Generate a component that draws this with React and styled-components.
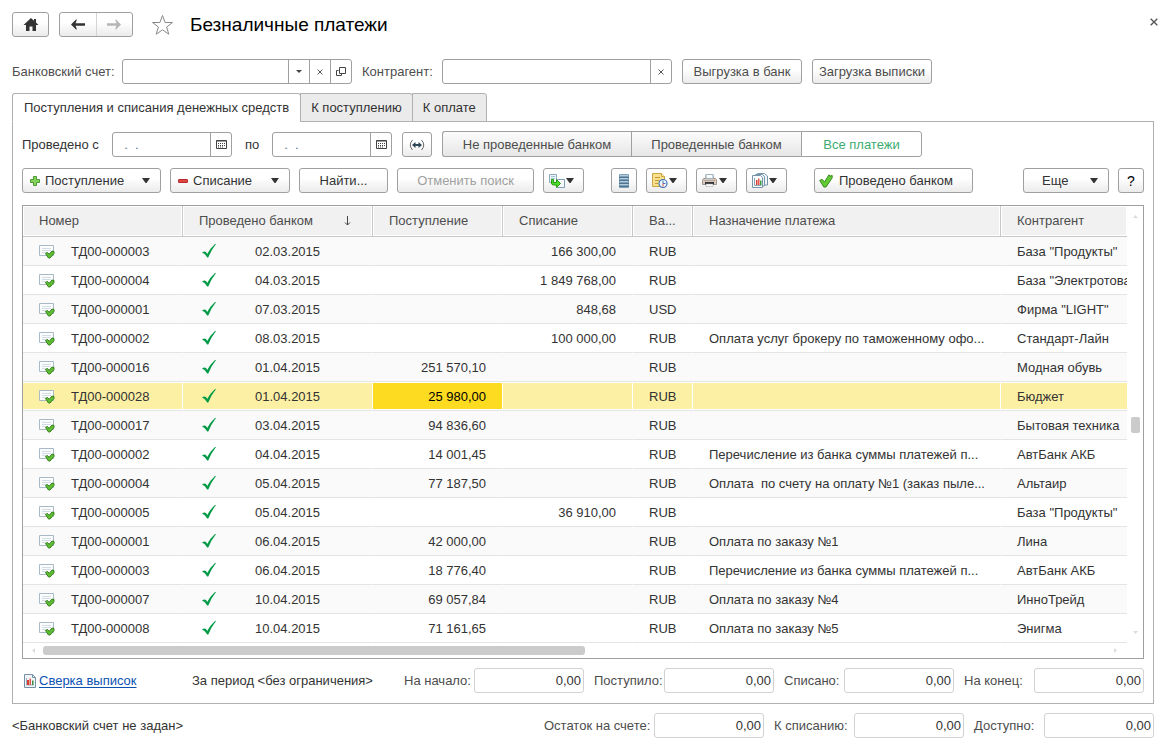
import React, { useState } from 'react'
import styled, { createGlobalStyle, css } from 'styled-components'

const rows = [
  { number: 'ТД00-000003', date: '02.03.2015', expense: '166 300,00', currency: 'RUB', contractor: 'База "Продукты"' },
  { number: 'ТД00-000004', date: '04.03.2015', expense: '1 849 768,00', currency: 'RUB', contractor: 'База "Электротова' },
  { number: 'ТД00-000001', date: '07.03.2015', expense: '848,68', currency: 'USD', contractor: 'Фирма "LIGHT"' },
  { number: 'ТД00-000002', date: '08.03.2015', expense: '100 000,00', currency: 'RUB', purpose: 'Оплата услуг брокеру по таможенному офо...', contractor: 'Стандарт-Лайн' },
  { number: 'ТД00-000016', date: '01.04.2015', income: '251 570,10', currency: 'RUB', contractor: 'Модная обувь' },
  { number: 'ТД00-000028', date: '01.04.2015', income: '25 980,00', currency: 'RUB', contractor: 'Бюджет' },
  { number: 'ТД00-000017', date: '03.04.2015', income: '94 836,60', currency: 'RUB', contractor: 'Бытовая техника' },
  { number: 'ТД00-000002', date: '04.04.2015', income: '14 001,45', currency: 'RUB', purpose: 'Перечисление из банка суммы платежей п...', contractor: 'АвтБанк АКБ' },
  { number: 'ТД00-000004', date: '05.04.2015', income: '77 187,50', currency: 'RUB', purpose: 'Оплата  по счету на оплату №1 (заказ пыле...', contractor: 'Альтаир' },
  { number: 'ТД00-000005', date: '05.04.2015', expense: '36 910,00', currency: 'RUB', contractor: 'База "Продукты"' },
  { number: 'ТД00-000001', date: '06.04.2015', income: '42 000,00', currency: 'RUB', purpose: 'Оплата по заказу №1', contractor: 'Лина' },
  { number: 'ТД00-000003', date: '06.04.2015', income: '18 776,40', currency: 'RUB', purpose: 'Перечисление из банка суммы платежей п...', contractor: 'АвтБанк АКБ' },
  { number: 'ТД00-000007', date: '10.04.2015', income: '69 057,84', currency: 'RUB', purpose: 'Оплата по заказу №4', contractor: 'ИнноТрейд' },
  { number: 'ТД00-000008', date: '10.04.2015', income: '71 161,65', currency: 'RUB', purpose: 'Оплата по заказу №5', contractor: 'Энигма' },
]

const tabs = ['Поступления и списания денежных средств', 'К поступлению', 'К оплате']

const modes = [
  { title: 'Не проведенные банком', width: 189 },
  { title: 'Проведенные банком', width: 170 },
  { title: 'Все платежи', width: 121 },
]

const periodTotals = [
  { id: 'start', title: 'На начало:', width: 70 },
  { id: 'income', title: 'Поступило:', width: 70 },
  { id: 'expense', title: 'Списано:', width: 60 },
  { id: 'end', title: 'На конец:', width: 70 },
]

const accountTotals = [
  { id: 'rest', title: 'Остаток на счете:', width: 110 },
  { id: 'writeoff', title: 'К списанию:', width: 80 },
  { id: 'available', title: 'Доступно:', width: 70 },
]

const Caret = () => (
  <svg width="8" height="5" viewBox="0 0 8 5"><path d="M0 0h8L4.500 5h-1z" fill="#333" /></svg>
)

const SmallCaret = () => (
  <svg width="6" height="3" viewBox="0 0 6 3"><path d="M0 0h6L3 3z" fill="#444" /></svg>
)

const Cross = ({ size = 6 }) => (
  <svg width={size} height={size} viewBox="0 0 6 6"><path d="M.5.5l5 5M5.500.5l-5 5" stroke="#555" strokeWidth="1" /></svg>
)

const HomeIcon = () => (
  <svg width="16" height="13" viewBox="0 0 16 13">
    <path d="M8 0l3 2.700V1h2v3.500L15.500 7H13v6H9.500V8.500h-3V13H3V7H.500z" fill="#333" />
  </svg>
)

const ArrowIcon = ({ color, flip }) => (
  <svg width="14" height="11" viewBox="0 0 14 11">
    <path
      d="M0 5.500L5.500 0v2L4.500 4.300H14v2.400H4.500L5.500 9v2z"
      fill={color}
      transform={flip ? 'rotate(180 7 5.500)' : undefined}
    />
  </svg>
)

const StarIcon = () => (
  <svg width="23" height="22" viewBox="0 0 23 22">
    <path d="M11.500 1.500l2.600 7h7.400l-5.900 4.500 2.200 7.200-6.300-4.400-6.300 4.400L7.400 13 1.500 8.500h7.400z" fill="#fff" stroke="#888" />
  </svg>
)

const OpenIcon = () => (
  <svg width="10" height="9" viewBox="0 0 10 9" fill="none" stroke="#444">
    <path d="M3.500.5h6v6h-6zM2.500 3.500h-2v5h5V7" />
  </svg>
)

const CalendarIcon = () => (
  <svg width="11" height="9" viewBox="0 0 11 9">
    <path d="M.5.5h10v8H.5z" fill="#fff" stroke="#444" />
    <path d="M.5 1h10" stroke="#444" />
    <path d="M2 3.500h7M2 5.500h7M2 7h5" stroke="#444" strokeDasharray="1 1" />
  </svg>
)

const PeriodIcon = () => (
  <svg width="16" height="12" viewBox="0 0 16 12" fill="none" stroke="#2f4656">
    <path d="M3.500 1Q-1 6 3.500 11M12.500 1Q17 6 12.500 11" stroke="#666" />
    <path d="M4 6h8" strokeWidth="2" />
    <path d="M3 6l3.500-3v6zM13 6L9.500 3v6z" fill="#2f4656" stroke="none" />
  </svg>
)

const PlusIcon = () => (
  <svg width="10" height="10" viewBox="0 0 10 10">
    <path d="M3.500.5h3v3h3v3h-3v3h-3v-3h-3v-3h3z" fill="#86d35c" stroke="#4c9a35" />
  </svg>
)

const MinusIcon = () => (
  <svg width="10" height="4" viewBox="0 0 10 4">
    <rect x=".5" y=".5" width="9" height="3" rx=".5" fill="#e04545" stroke="#b82a2a" />
  </svg>
)

const CreateFromIcon = () => (
  <svg width="16" height="14" viewBox="0 0 16 14">
    <path d="M.5.5h7v8h-7z" fill="#eef5fa" stroke="#8eaac0" />
    <path d="M2 2.500h4M2 4.500h4M2 6.500h2" stroke="#a9c3d6" />
    <path d="M8.500 5.500h7v8h-7z" fill="#f6fafc" stroke="#7f9db3" />
    <path d="M2.500 5.500h2V8.500h3V5.500L11.500 9.500l-4 4v-2.500H4.500Q2.500 11 2.500 9z" fill="#4edb29" stroke="#239c12" />
  </svg>
)

const StackIcon = () => (
  <svg width="10" height="14" viewBox="0 0 10 14">
    <rect x="0" y="0" width="10" height="14" rx="1" fill="#7d9fb8" />
    <path d="M1 1.500h8M1 4.500h8M1 7.500h8M1 10.500h8" stroke="#b4cddd" />
    <path d="M0 3.500h10M0 6.500h10M0 9.500h10M0 12.500h10" stroke="#4f7590" />
  </svg>
)

const NoteClockIcon = () => (
  <svg width="16" height="15" viewBox="0 0 16 15">
    <path d="M.5.5h9l3 3v10H.5z" fill="#f9e08c" stroke="#caa544" />
    <path d="M9.500.5v3h3" fill="#fff4c4" stroke="#caa544" />
    <path d="M3 4.500h5M3 7.500h4M3 10.500h3" stroke="#c09a3c" />
    <circle cx="11" cy="10.500" r="4" fill="#f2f8fe" stroke="#4076b4" strokeWidth="1.200" />
    <path d="M11 7.500v3h2.500" fill="none" stroke="#4076b4" />
    <path d="M11 10.500v3" stroke="#d64b3c" />
  </svg>
)

const PrinterIcon = () => (
  <svg width="15" height="13" viewBox="0 0 15 13">
    <path d="M4 .5h7l1 5H3z" fill="#fafcfd" stroke="#a3b3be" />
    <path d="M1.500 4.500h12L14.500 6v4.500h-14V6z" fill="#d5cbc3" stroke="#a3968c" />
    <path d="M4 .5h7v4H4z" fill="#fafcfd" stroke="#a3b3be" />
    <path d="M2 6h11v1H2z" fill="#b5a498" />
    <path d="M3 8h9v2.500H3z" fill="#333" />
    <path d="M4 10h7v2.500H4z" fill="#fff" stroke="#999" strokeWidth=".5" />
    <path d="M12 6h1v1h-1z" fill="#e8884c" />
  </svg>
)

const ReportsIcon = () => (
  <svg width="16" height="15" viewBox="0 0 16 15">
    <path d="M5.500.5h7l3 2.500v9h-10z" fill="#eef4f8" stroke="#7896ab" />
    <path d="M3.500 1.500h7l2 2v9.500h-9z" fill="#eef4f8" stroke="#7896ab" />
    <path d="M.5 2.500h8l2 2v10H.5z" fill="#fff" stroke="#7896ab" />
    <path d="M2.500 5v7.500h7" fill="none" stroke="#8ba5b7" />
    <path d="M4 7h1.500v5H4z" fill="#d93a31" />
    <path d="M6 5.500h1.500V12H6z" fill="#e7564d" />
    <path d="M8 7.500h1.500V12H8z" fill="#3ba03f" />
  </svg>
)

const ReportIcon = () => (
  <svg width="12" height="14" viewBox="0 0 12 14">
    <path d="M.5.5h8l3 3v10H.5z" fill="#f1f5f8" stroke="#7590a4" />
    <path d="M8.500.5v3h3" fill="none" stroke="#7590a4" />
    <path d="M2.500 4v7h7" fill="none" stroke="#9db2c1" />
    <path d="M3 6h2v5H3z" fill="#d93a31" />
    <path d="M5.500 4.500H7V11H5.500z" fill="#e2574e" />
    <path d="M8 6.500h1.500V11H8z" fill="#3e8c42" />
  </svg>
)

const GreenCheckIcon = () => (
  <svg width="14" height="14" viewBox="0 0 14 14">
    <path d="M.700 6.500L3 5.300 5.500 8 10 .8l.8 1.400 2.400-.7v2.300L7 13H4.800z" fill="#62cc34" stroke="#39871f" />
  </svg>
)

const DocumentIcon = () => (
  <svg width="16" height="14" viewBox="0 0 16 14">
    <path d="M.5.5h14v10H.5z" fill="#fafcfd" stroke="#a9b9c6" />
    <path d="M3 3.500h9M3 5.500h9M3 7.500h5" stroke="#d2dde5" />
    <path d="M6.500 8.500L8.500 7.500l1.700 1.800L13 6l2 .500v2L11 13H9.500z" fill="#60be33" stroke="#35801d" />
  </svg>
)

const PostedIcon = () => (
  <svg width="14" height="14" viewBox="0 0 14 14">
    <path d="M0 8.500Q2.500 7 4 8l1.200 2Q8 4.500 13 0h1Q9 6.500 6.300 13.500H5.200Q3 9.500 0 8.500z" fill="#009a46" />
  </svg>
)

const SortIcon = () => (
  <svg width="7" height="10" viewBox="0 0 7 10" fill="none" stroke="#444">
    <path d="M3.500 0v9M1 6.500L3.500 9 6 6.500" />
  </svg>
)

const ScrollArrow = ({ d, width = 5, height = 3 }) => (
  <svg width={width} height={height} viewBox={`0 0 ${width} ${height}`}><path d={d} fill="#dcdcdc" /></svg>
)

const Total = ({ id, title, width }) => (
  <TotalBox>
    <TotalLabel htmlFor={id} $width={width}>{title}</TotalLabel>
    <TotalInput id={id} defaultValue="0,00" readOnly />
  </TotalBox>
)

const App = () => {
  const [tab, setTab] = useState(0)
  const [mode, setMode] = useState(2)
  const [selected, setSelected] = useState(5)

  return (
    <Page>
      <GlobalStyle />
      <Header>
        <Button $width={37} aria-label="Начальная страница"><HomeIcon /></Button>
        <NavGroup>
          <NavButton aria-label="Назад"><ArrowIcon color="#333" /></NavButton>
          <NavButton aria-label="Вперед"><ArrowIcon color="#b5b5b5" flip /></NavButton>
        </NavGroup>
        <PlainButton aria-label="В избранное"><StarIcon /></PlainButton>
        <Title>Безналичные платежи</Title>
        <CloseButton aria-label="Закрыть"><Cross size={8} /></CloseButton>
      </Header>

      <Content>
        <Filters>
          <FieldLabel htmlFor="account" $width={110}>Банковский счет:</FieldLabel>
          <Field $width={230}>
            <FieldInput id="account" />
            <FieldButton aria-label="Выбрать из списка"><SmallCaret /></FieldButton>
            <FieldButton aria-label="Очистить счет"><Cross /></FieldButton>
            <FieldButton aria-label="Открыть"><OpenIcon /></FieldButton>
          </Field>
          <FieldLabel htmlFor="contractor" $width={80} $indent={10}>Контрагент:</FieldLabel>
          <Field $width={230}>
            <FieldInput id="contractor" />
            <FieldButton aria-label="Очистить контрагента"><Cross /></FieldButton>
          </Field>
          <FilterActions>
            <Button $width={120} $muted>Выгрузка в банк</Button>
            <Button $width={120} $muted>Загрузка выписки</Button>
          </FilterActions>
        </Filters>

        <Tabs role="tablist">
          {tabs.map((title, i) => (
            <Tab key={title} role="tab" aria-selected={tab === i} $active={tab === i} onClick={() => setTab(i)}>
              {title}
            </Tab>
          ))}
        </Tabs>

        <Panel>
          <Period>
            <FieldLabel htmlFor="from" $width={90} $dark>Проведено с</FieldLabel>
            <Field $width={120}>
              <DateInput id="from" defaultValue="  .  .    " />
              <FieldButton aria-label="Календарь: начало"><CalendarIcon /></FieldButton>
            </Field>
            <FieldLabel htmlFor="to" $width={27} $indent={13} $dark>по</FieldLabel>
            <Field $width={120}>
              <DateInput id="to" defaultValue="  .  .    " />
              <FieldButton aria-label="Календарь: конец"><CalendarIcon /></FieldButton>
            </Field>
            <PeriodActions>
              <Button $width={30} aria-label="Выбрать период"><PeriodIcon /></Button>
              <Segments>
                {modes.map((m, i) => (
                  <Segment key={m.title} $width={m.width} $active={mode === i} onClick={() => setMode(i)}>
                    {m.title}
                  </Segment>
                ))}
              </Segments>
            </PeriodActions>
          </Period>

          <Toolbar>
            <ToolGroup>
              <MenuButton $width={139}><PlusIcon />Поступление<Caret /></MenuButton>
              <MenuButton $width={120}><MinusIcon />Списание<Caret /></MenuButton>
              <Button $width={89}>Найти...</Button>
              <Button $width={137} disabled>Отменить поиск</Button>
              <IconMenu aria-label="Создать на основании"><CreateFromIcon /><Caret /></IconMenu>
            </ToolGroup>
            <ToolGroup>
              <Button $width={26} aria-label="Реестр"><StackIcon /></Button>
              <IconMenu aria-label="Напоминания"><NoteClockIcon /><Caret /></IconMenu>
              <IconMenu aria-label="Печать"><PrinterIcon /><Caret /></IconMenu>
              <IconMenu aria-label="Отчеты"><ReportsIcon /><Caret /></IconMenu>
            </ToolGroup>
            <PostButton $width={159}><GreenCheckIcon />Проведено банком</PostButton>
            <ToolGroup $end>
              <MoreButton $width={86}>Еще<Caret /></MoreButton>
              <HelpButton $width={26} aria-label="Справка">?</HelpButton>
            </ToolGroup>
          </Toolbar>

          <Grid>
            <TableArea>
              <Table>
                <colgroup>
                  <Col $width={160} />
                  <Col $width={190} />
                  <Col $width={130} />
                  <Col $width={130} />
                  <Col $width={60} />
                  <Col />
                  <Col $width={126} />
                </colgroup>
                <thead>
                  <tr>
                    <Th>Номер</Th>
                    <Th><Sorted>Проведено банком<SortIcon /></Sorted></Th>
                    <Th>Поступление</Th>
                    <Th>Списание</Th>
                    <Th>Ва...</Th>
                    <Th>Назначение платежа</Th>
                    <Th>Контрагент</Th>
                  </tr>
                </thead>
                <tbody>
                  {rows.map((row, i) => (
                    <Row key={i} $selected={selected === i} onClick={() => setSelected(i)}>
                      <Td><NumberCell><DocumentIcon />{row.number}</NumberCell></Td>
                      <Td><DateCell><PostedIcon />{row.date}</DateCell></Td>
                      <Td $right $current={selected === i}>{row.income}</Td>
                      <Td $right>{row.expense}</Td>
                      <Td>{row.currency}</Td>
                      <Td>{row.purpose}</Td>
                      <Td>{row.contractor}</Td>
                    </Row>
                  ))}
                </tbody>
              </Table>
            </TableArea>
            <VScroll>
              <ScrollArrow d="M0 3h5L2.500 0z" />
              <VThumb />
              <ScrollArrow d="M0 0h5L2.500 3z" />
            </VScroll>
            <HScroll>
              <ScrollArrow d="M3 0v5L0 2.500z" width={3} height={5} />
              <HTrack><HThumb /></HTrack>
              <ScrollArrow d="M0 0v5l3-2.500z" width={3} height={5} />
            </HScroll>
          </Grid>

          <Summary>
            <ReportLink href="#report"><ReportIcon /><span>Сверка выписок</span></ReportLink>
            <PeriodText>За период &lt;без ограничения&gt;</PeriodText>
            <Totals>
              {periodTotals.map((t) => <Total key={t.id} {...t} />)}
            </Totals>
          </Summary>
        </Panel>

        <Footer>
          <span>&lt;Банковский счет не задан&gt;</span>
          <Totals>
            {accountTotals.map((t) => <Total key={t.id} {...t} />)}
          </Totals>
        </Footer>
      </Content>
    </Page>
  )
}

const GlobalStyle = createGlobalStyle`
  * {
    box-sizing: border-box;
  }
  body {
    margin: 0;
    background: #fff;
    color: #333;
    font: 13px/16px "Liberation Sans", Arial, sans-serif;
  }
  button, input {
    font: inherit;
    color: inherit;
  }
  svg {
    display: block;
    flex: none;
  }
`
const Page = styled.div`
  padding: 12px;
`
const Header = styled.header`
  display: flex;
  align-items: center;
  height: 25px;
  margin-bottom: 22px;
`
const Content = styled.main`
  margin-right: 5px;
`
const Button = styled.button`
  display: flex;
  align-items: center;
  justify-content: center;
  flex: none;
  width: ${(p) => p.$width}px;
  height: 25px;
  padding: 0;
  border: 1px solid #a0a0a0;
  border-radius: 3px;
  background: linear-gradient(#fff 40%, #ebebeb);
  color: ${(p) => (p.$muted ? '#4d4d4d' : '#333')};
  white-space: nowrap;
  &:disabled {
    color: #a0a0a0;
  }
`
const NavGroup = styled.div`
  display: flex;
  width: 74px;
  height: 25px;
  margin-left: 10px;
  border: 1px solid #a0a0a0;
  border-radius: 3px;
  background: linear-gradient(#fff 40%, #ebebeb);
`
const NavButton = styled.button`
  display: flex;
  align-items: center;
  justify-content: center;
  flex: 1;
  padding: 0;
  border: 0;
  background: none;
  & + & {
    border-left: 1px solid #d4d4d4;
  }
`
const PlainButton = styled.button`
  margin: 0 16px 0 18px;
  padding: 0;
  border: 0;
  background: none;
`
const CloseButton = styled(PlainButton)`
  margin: 0 1px 6px auto;
`
const Title = styled.h1`
  margin: 0;
  color: #000;
  font-size: 19px;
  font-weight: 400;
  line-height: 24px;
`
const Filters = styled.div`
  display: flex;
  align-items: center;
  margin-bottom: 9px;
`
const FilterActions = styled.div`
  display: flex;
  gap: 10px;
  margin-left: 10px;
`
const FieldLabel = styled.label`
  flex: none;
  width: ${(p) => p.$width}px;
  margin-left: ${(p) => p.$indent || 0}px;
  color: ${(p) => (p.$dark ? '#333' : '#4d4d4d')};
  white-space: nowrap;
`
const Field = styled.div`
  display: flex;
  width: ${(p) => p.$width}px;
  height: 25px;
  border: 1px solid #a0a0a0;
  border-radius: 3px;
  background: #fff;
`
const FieldInput = styled.input`
  flex: 1;
  min-width: 0;
  padding: 0 4px;
  border: 0;
  outline: 0;
  background: none;
`
const DateInput = styled(FieldInput)`
  color: #5f7a8c;
`
const FieldButton = styled.button`
  display: flex;
  align-items: center;
  justify-content: center;
  width: 21px;
  padding: 0;
  border: 0;
  border-left: 1px solid #a0a0a0;
  background: none;
`
const Tabs = styled.div`
  display: flex;
`
const Tab = styled.button`
  height: 29px;
  margin: 0 0 -1px;
  padding: 0 11px;
  border: 1px solid #b0b0b0;
  border-radius: 3px 3px 0 0;
  background: #ebebeb;
  white-space: nowrap;
  & + & {
    margin-left: -1px;
    padding: 0 10px;
    border-top-left-radius: 0;
  }
  ${(p) => p.$active && css`
    border-bottom-color: #fff;
    background: #fff;
  `}
`
const Panel = styled.section`
  padding: 9px 9px 10px;
  border: 1px solid #b0b0b0;
`
const Period = styled.div`
  display: flex;
  align-items: flex-end;
  margin-bottom: 11px;
  ${FieldLabel} {
    line-height: 25px;
  }
`
const PeriodActions = styled.div`
  display: flex;
  align-items: flex-end;
  gap: 10px;
  margin-left: 10px;
`
const Segments = styled.div`
  display: flex;
  height: 26px;
`
const Segment = styled.button`
  width: ${(p) => p.$width}px;
  padding: 2px 0 0;
  border: 1px solid #a0a0a0;
  border-right-width: 0;
  background: ${(p) => (p.$active ? '#fff' : 'linear-gradient(#fcfcfc, #e6e6e6)')};
  color: ${(p) => (p.$active ? '#3bab70' : '#4d4d4d')};
  &:first-child {
    border-radius: 3px 0 0 3px;
  }
  &:last-child {
    border-right-width: 1px;
    border-radius: 0 3px 3px 0;
  }
`
const Toolbar = styled.div`
  display: flex;
  gap: 27px;
  margin-bottom: 12px;
`
const ToolGroup = styled.div`
  display: flex;
  gap: 9px;
  margin-left: ${(p) => (p.$end ? 'auto' : '0')};
`
const MenuButton = styled(Button)`
  justify-content: flex-start;
  gap: 5px;
  padding: 0 10px 0 7px;
  svg:last-child {
    margin-left: auto;
  }
`
const MoreButton = styled(MenuButton)`
  padding-left: 18px;
`
const IconMenu = styled(Button)`
  width: 41px;
  justify-content: space-between;
  padding: 0 9px 0 5px;
`
const PostButton = styled(Button)`
  justify-content: flex-start;
  gap: 6px;
  padding-left: 4px;
`
const HelpButton = styled(Button)`
  color: #000;
  font-size: 14px;
`
const Grid = styled.div`
  display: grid;
  grid-template-columns: minmax(0, 1fr) 16px;
  margin-bottom: 9px;
  border: 1px solid #a0a0a0;
`
const TableArea = styled.div`
  overflow: hidden;
`
const Table = styled.table`
  width: 100%;
  table-layout: fixed;
  border-collapse: separate;
  border-spacing: 0;
`
const Col = styled.col`
  width: ${(p) => (p.$width ? `${p.$width}px` : 'auto')};
`
const Th = styled.th`
  height: 31px;
  padding: 0 8px 0 16px;
  border-right: 1px solid #c8c8c8;
  border-bottom: 1px solid #c8c8c8;
  background: #f1f1f1;
  box-shadow: inset 0 0 0 1px #fff;
  color: #4d4d4d;
  font-weight: 400;
  text-align: left;
  white-space: nowrap;
  &:last-child {
    border-right: 0;
  }
`
const Sorted = styled.div`
  display: flex;
  align-items: center;
  justify-content: space-between;
  padding-right: 13px;
`
const Td = styled.td`
  height: 29px;
  padding: ${(p) => (p.$right ? '2px 16px 0 0' : '2px 0 0 16px')};
  border-right: 1px solid transparent;
  border-bottom: 1px solid #e4e4e4;
  overflow: hidden;
  text-align: ${(p) => (p.$right ? 'right' : 'left')};
  white-space: pre;
  &:last-child {
    border-right: 0;
  }
`
const Row = styled.tr`
  &:nth-child(odd) {
    background: #fafafa;
  }
  ${(p) => p.$selected && css`
    ${Td} {
      border-right-color: #fff;
      background: #fcf0a5;
      box-shadow: inset 0 1px #fff, inset 0 -1px #fff;
    }
    ${Td}:nth-child(3) {
      background: #fcdb20;
      color: #000;
    }
  `}
`
const NumberCell = styled.div`
  display: flex;
  align-items: center;
  gap: 16px;
`
const DateCell = styled.div`
  display: flex;
  align-items: center;
  gap: 39px;
  padding-left: 3px;
  svg {
    margin-bottom: 2px;
  }
`
const VScroll = styled.div`
  display: flex;
  flex-direction: column;
  align-items: center;
  justify-content: space-between;
  padding: 9px 0;
`
const VThumb = styled.div`
  width: 9px;
  height: 16px;
  border-radius: 2px;
  background: #cbcbcb;
`
const HScroll = styled.div`
  display: flex;
  align-items: center;
  gap: 8px;
  height: 15px;
  padding: 0 10px 0 9px;
`
const HTrack = styled.div`
  flex: 1;
`
const HThumb = styled.div`
  width: 51%;
  height: 9px;
  border-radius: 3px;
  background: #cbcbcb;
`
const Summary = styled.div`
  display: flex;
  align-items: center;
`
const ReportLink = styled.a`
  display: flex;
  align-items: center;
  gap: 3px;
  width: 170px;
  padding-left: 2px;
  color: #0b52b3;
  text-decoration: none;
  span {
    text-decoration: underline;
    text-underline-offset: 2px;
  }
`
const PeriodText = styled.span`
  white-space: nowrap;
`
const Totals = styled.div`
  display: flex;
  gap: 10px;
  margin-left: auto;
`
const TotalBox = styled.div`
  display: flex;
  align-items: center;
`
const TotalLabel = styled.label`
  width: ${(p) => p.$width}px;
  color: #4d4d4d;
  white-space: nowrap;
`
const TotalInput = styled.input`
  width: 110px;
  height: 25px;
  padding: 0 2px;
  border: 1px solid #d2d2d2;
  border-radius: 3px;
  outline: 0;
  background: #fff;
  text-align: right;
`
const Footer = styled.footer`
  display: flex;
  align-items: center;
  margin-top: 9px;
`

export default App
